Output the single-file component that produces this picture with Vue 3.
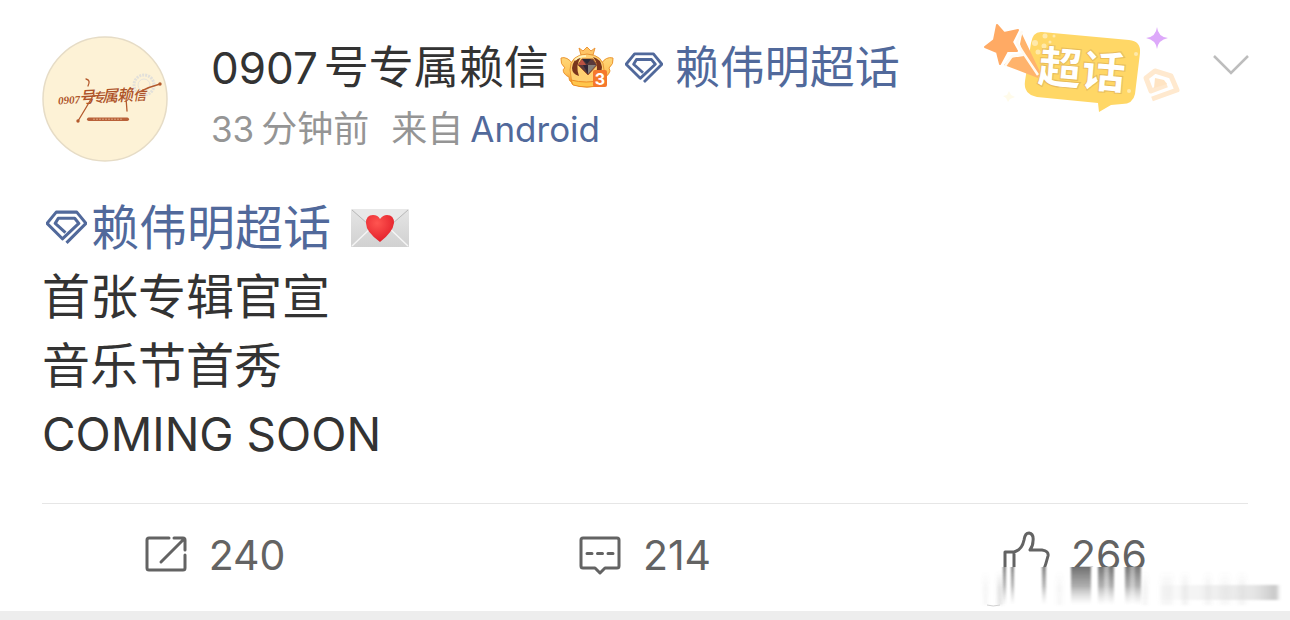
<script setup>
const author = { digits: '0907', name: '号专属赖信' }
const topic = '赖伟明超话'
const lines = ['首张专辑官宣', '音乐节首秀', 'COMING SOON']
const counts = { reposts: 240, comments: 214, likes: 266 }

const gem = 'M20 32 L39 13 L30 2 H10 L1 13 L16 28 L32 13 L28 8 H12 L9 13 L19 22'

const streaks = [
  { x: 33, w: 3, o: 0.85 },
  { x: 41, w: 3, o: 0.85 },
  { x: 72, w: 4, o: 0.8 },
  { x: 101, w: 20, o: 0.95 },
  { x: 128, w: 6, o: 0.9 },
  { x: 134, w: 5, o: 0.55 },
  { x: 139, w: 5, o: 0.9 },
  { x: 155, w: 5, o: 0.9 },
  { x: 160, w: 5, o: 0.6 },
  { x: 165, w: 6, o: 0.9 },
]
const hazes = [
  { x: 14, w: 3, o: 0.12 },
  { x: 28, w: 4, o: 0.3 },
  { x: 87, w: 5, o: 0.08 },
  { x: 173, w: 4, o: 0.12 },
  { x: 191, w: 12, o: 0.08 },
  { x: 212, w: 6, o: 0.12 },
  { x: 235, w: 6, o: 0.1 },
  { x: 250, w: 10, o: 0.07 },
  { x: 268, w: 8, o: 0.09 },
]
</script>

<template>
  <main class="page">
    <article class="post">
      <header class="head">
        <a class="avatar" href="#" aria-label="0907号专属赖信">
          <svg viewBox="0 0 126 126" width="126" height="126">
            <circle cx="63" cy="63" r="62" fill="#fdf2d6" stroke="#e6dcc6" stroke-width="1.5" />
            <circle cx="102" cy="49" r="10" fill="none" stroke="#e2e0da" stroke-width="3" stroke-dasharray="2 1" />
            <circle cx="102" cy="49" r="6" fill="none" stroke="#e6e3db" />
            <g fill="#ad5228" transform="rotate(-3 62 62)">
              <text x="16" y="66" class="sig-num">0907</text>
              <text y="66" class="sig"><tspan x="37" class="tall">号</tspan><tspan x="50">专</tspan><tspan x="60" class="tall">属</tspan><tspan x="75" class="tall">赖</tspan><tspan x="91">信</tspan></text>
            </g>
            <g fill="none" stroke="#b45a2d" stroke-width="1.3" stroke-linecap="round">
              <path d="M44 43 Q49 44 46 50 M52 58 Q44 72 36 85" />
              <path d="M95 57 Q106 51 118 48" />
              <path d="M84 62 L85 75" />
            </g>
            <circle cx="36" cy="85" r="1.700" fill="#b45a2d" />
            <circle cx="118" cy="48" r="1.700" fill="#b45a2d" />
            <rect x="45" y="81.500" width="42" height="3.500" rx="1.700" fill="#b96139" />
            <path d="M51 83.200 H81" stroke="#dca27e" stroke-width="1" stroke-dasharray="2 1" />
          </svg>
        </a>

        <div class="who">
          <div class="name-row">
            <a class="name" href="#"><span class="digits">{{ author.digits }}</span><span>{{ author.name }}</span></a>
            <svg class="crown" viewBox="0 0 54 44" width="54" height="44" aria-hidden="true">
              <defs>
                <linearGradient id="gold" x1="0" y1="0" x2="0" y2="1">
                  <stop offset="0" stop-color="#ffd779" />
                  <stop offset="0.6" stop-color="#ffc45b" />
                  <stop offset="1" stop-color="#f08a23" />
                </linearGradient>
              </defs>
              <path d="M13 18 Q7 10 1 12 Q0 18 5 22 Q2 23 4 27 Q6 30 9 31 Q8 35 13 37 H41 Q45 35 45 31 Q49 29 50 25 L49 22 Q54 18 53 12 Q46 10 41 18Z" fill="url(#gold)" stroke="#ec9734" stroke-width="1" />
              <path d="M19 2 L23 5 L27 1 L31 5 L35 2 L33 9 H21Z" fill="#ffc565" stroke="#ec9638" />
              <path d="M10 24 Q10 9 27 8 Q44 9 44 24 L42 38 Q27 44 12 38Z" fill="#ffd071" stroke="#e79535" />
              <path d="M12 22 Q13 13 21 11 Q15 19 19 30 Q12 28 12 22Z M42 21 Q41 13 33 11 Q39 18 36 28 Q42 27 42 21Z" fill="#7a351c" />
              <path d="M15 14 Q19 10 26 10" fill="none" stroke="#fff1b7" stroke-width="2" />
              <path d="M18 19 L22 13 H33 L37 19 L28 29Z" fill="#593a3b" stroke="#a15628" />
              <path d="M18 19 L22 13 L26 19Z" fill="#ba5142" />
              <path d="M22 13 H31 L27 18Z" fill="#2b2836" />
              <path d="M27 19 H36 L28 28Z" fill="#87817a" />
              <path d="M23 19 H28 V28Z" fill="#302435" />
              <path d="M11 34 Q26 38 42 34 L41 39 Q27 43 13 39Z" fill="#ffc64c" stroke="#ed8d25" />
              <rect x="33" y="24" width="14" height="17" rx="2" fill="#f5782c" />
              <text x="40" y="39" text-anchor="middle" class="level">3</text>
            </svg>
            <a class="topic" href="#">
              <svg class="gem" viewBox="0 0 40 34" width="38" height="32" aria-hidden="true"><path :d="gem" /></svg>
              <span>{{ topic }}</span>
            </a>
          </div>
          <div class="meta">
            <time><span class="latin">33</span><span>分钟前</span></time>
            <span class="from"><span>来自</span><a class="latin" href="#">Android</a></span>
          </div>
        </div>

        <a class="sticker" href="#" aria-label="超话">
          <svg viewBox="980 20 205 96" width="205" height="96">
            <path d="M1042 32 L1129 40 Q1141 41 1140 53 L1135 94 Q1133 104 1122 104 L1111 105 L1099 112 L1098 103 L1037 97 Q1023 94 1025 81 L1031 43 Q1033 31 1042 32Z" fill="#ffd766" />
            <g fill="#ffe9ab">
              <circle cx="1035" cy="43" r="3" /><circle cx="1045" cy="36" r="2.500" /><circle cx="1044" cy="46" r="2.500" />
              <circle cx="1038" cy="52" r="2.500" /><circle cx="1054" cy="36" r="1.500" /><circle cx="1050" cy="42" r="1.500" />
              <circle cx="1136" cy="54" r="2" /><circle cx="1129" cy="91" r="2" />
            </g>
            <path d="M1022 34 L1040 72 L1038 78 L1004 65 L1010 58 L1024 56 L1020 44Z" fill="#ffb36c" />
            <path d="M997 25 L1004 33 L1018 30 L1012 42 L1017 51 L1007 51 L1000 64 L997 52 L985 47 L994 40Z" fill="#ffaa64" stroke="#ffaa64" stroke-width="2" stroke-linejoin="round" />
            <path d="M1022 31 L1017 43 L1024 54 L1012 56 L1005 66 M1024 54 L1038 75" fill="none" stroke="#fffaf2" stroke-width="2.500" stroke-linejoin="round" />
            <text x="1082" y="86" text-anchor="middle" transform="rotate(5 1082 70)" class="sticker-text">超话</text>
            <path d="M1157 27 Q1158 37 1168 38 Q1158 40 1157 49 Q1156 40 1146 38 Q1156 37 1157 27Z" fill="#dda9fa" />
            <path d="M1152 99 L1177 90 L1171 76 L1155 71 L1146 78 L1151 91 L1167 85" fill="none" stroke="#ffe9cf" stroke-width="5" stroke-linejoin="round" />
            <path d="M1155 78 L1164 80 L1167 84 L1154 88Z" fill="#ffe4c3" />
            <path d="M1009 91 L1011 95 L1015 97 L1010 99 L1008 102 L1006 98 L1003 96 L1007 95Z" fill="#fffbea" />
          </svg>
        </a>

        <button class="more" type="button" aria-label="更多">
          <svg viewBox="0 0 38 22" width="38" height="22"><path d="M2 2 L19 19 L36 2" fill="none" stroke="#bdbdbd" stroke-width="2.500" /></svg>
        </button>
      </header>

      <div class="content">
        <p>
          <a class="body-topic" href="#"><svg class="gem" viewBox="0 0 40 34" width="41" height="35" aria-hidden="true"><path :d="gem" /></svg><span>{{ topic }}</span></a>
          <svg class="letter" viewBox="0 0 58 38" width="58" height="38" role="img" aria-label="情书">
            <defs>
              <linearGradient id="paper" x1="0" y1="0" x2="0" y2="1">
                <stop offset="0" stop-color="#e5e5e5" /><stop offset="1" stop-color="#d1d1d1" />
              </linearGradient>
              <radialGradient id="heart" cx="0.4" cy="0.3" r="0.7">
                <stop offset="0" stop-color="#ff5550" /><stop offset="1" stop-color="#e3202b" />
              </radialGradient>
            </defs>
            <rect width="58" height="38" rx="1" fill="url(#paper)" />
            <path d="M1 37 L22 17 M57 37 L36 17" stroke="#f5f5f5" stroke-width="1.500" />
            <path d="M1 0 L25 22 Q29 25 33 22 L57 0Z" fill="#e8e8e8" />
            <path d="M1 1 L25 22 Q29 25 33 22 L57 1" fill="none" stroke="#b9b9b9" />
            <path d="M29 33 Q15 23 15 14 Q15 6 22 6 Q27 6 29 10 Q32 6 36 6 Q43 6 43 14 Q42 23 29 33Z" fill="url(#heart)" />
          </svg>
        </p>
        <p v-for="line in lines" :key="line" :class="{ caps: line === 'COMING SOON' }">{{ line }}</p>
      </div>

      <footer class="actions">
        <button type="button" aria-label="转发 240">
          <svg class="icon" viewBox="0 0 42 42" width="42" height="42">
            <path d="M24 4 H4 Q2 4 2 6 V34 Q2 36 4 36 H38 Q40 36 40 34 V21 M29 4 H38 Q40 4 40 6 V16 M16 28 L39 5" />
          </svg>
          <span>{{ counts.reposts }}</span>
        </button>
        <button type="button" aria-label="评论 214">
          <svg class="icon" viewBox="0 0 42 42" width="42" height="42">
            <path d="M4 4 H38 Q40 4 40 6 V32 Q40 34 38 34 H26 L21 39 L16 34 H4 Q2 34 2 32 V6 Q2 4 4 4Z M8 19.500 H13 M18.500 19.500 H23.500 M29 19.500 H34" />
          </svg>
          <span>{{ counts.comments }}</span>
        </button>
        <button type="button" aria-label="赞 266">
          <svg class="icon" viewBox="0 0 46 42" width="46" height="42">
            <path d="M11 38 H2 V18 H11Z V18 Q19 16 21 6 Q22 -1 26 -1 Q31 0 30 7 Q30 12 27 16 H39 Q46 17 45 22 Q43 30 40 38 H11" />
          </svg>
          <span>{{ counts.likes }}</span>
        </button>
      </footer>

      <svg class="smear" viewBox="0 0 320 42" width="320" height="42" aria-hidden="true">
        <defs>
          <linearGradient id="fade" x1="0" y1="0" x2="0" y2="1">
            <stop offset="0" stop-color="#686868" />
            <stop offset="0.5" stop-color="#8d8d8d" stop-opacity="0.75" />
            <stop offset="1" stop-color="#c0c0c0" stop-opacity="0" />
          </linearGradient>
          <linearGradient id="haze" x1="0" y1="0" x2="0" y2="1">
            <stop offset="0" stop-color="#777" stop-opacity="0" />
            <stop offset="0.5" stop-color="#777" />
            <stop offset="1" stop-color="#777" stop-opacity="0.8" />
          </linearGradient>
          <linearGradient id="bar" x1="0" y1="0" x2="1" y2="0">
            <stop offset="0" stop-color="#ddd" stop-opacity="0.1" />
            <stop offset="0.8" stop-color="#d4d4d4" stop-opacity="0.6" />
            <stop offset="1" stop-color="#c4c4c4" />
          </linearGradient>
          <filter id="soft" x="-0.1" y="-0.1" width="1.2" height="1.2"><feGaussianBlur stdDeviation="1 0" /></filter>
          <filter id="softer"><feGaussianBlur stdDeviation="2 1" /></filter>
        </defs>
        <rect width="320" height="42" fill="#fff" />
        <g filter="url(#softer)">
          <rect v-for="h in hazes" :key="h.x" :x="h.x" y="4" :width="h.w" height="34" fill="url(#haze)" :opacity="h.o" />
          <rect x="190" y="18" width="118" height="15" fill="url(#bar)" />
        </g>
        <g filter="url(#soft)">
          <rect v-for="s in streaks" :key="s.x" :x="s.x" y="0" :width="s.w" height="38" fill="url(#fade)" :opacity="s.o" />
        </g>
        <path d="M17 38 Q23 40 30 38" fill="none" stroke="#d0d0d0" stroke-width="1" />
      </svg>
    </article>
  </main>
</template>

<style scoped>
.page {
  min-height: 100vh;
  background: #ededed;
  font-family: Inter, "Noto Sans CJK SC", sans-serif;
  color: #333;
}
.post {
  position: relative;
  background: #fff;
  padding-top: 36px;
}
a {
  color: #51699b;
  text-decoration: none;
}
button {
  border: 0;
  padding: 0;
  background: none;
  font: inherit;
  color: inherit;
  cursor: pointer;
}
svg {
  display: block;
  flex: none;
}
.head {
  display: flex;
  align-items: flex-start;
  padding: 0 40px 0 42px;
}
.avatar {
  flex: none;
}
.sig-num {
  font: italic 600 11px "Liberation Serif", serif;
}
.sig {
  font: italic 500 13px "Noto Sans CJK SC", sans-serif;
}
.tall {
  font-size: 16px;
}
.who {
  flex: 1;
  min-width: 0;
  margin-left: 43px;
}
.name-row {
  display: flex;
  align-items: center;
  height: 64px;
  gap: 11px;
  font-size: 45px;
  line-height: 60px;
  white-space: nowrap;
}
.name {
  display: flex;
  align-items: baseline;
  gap: 6px;
  color: #333;
}
.digits {
  font-size: 44px;
}
.level {
  font: bold 16px Inter, sans-serif;
  fill: #fff;
}
.topic {
  display: flex;
  align-items: center;
  gap: 12px;
}
.gem path {
  fill: none;
  stroke: #51699b;
  stroke-width: 3;
  stroke-linejoin: round;
}
.meta {
  display: flex;
  gap: 22px;
  font-size: 36px;
  line-height: 58px;
  color: #959595;
  white-space: nowrap;
}
.meta time,
.from {
  display: flex;
  align-items: baseline;
  gap: 7px;
}
.latin {
  font-size: 35px;
}
.sticker {
  flex: none;
  margin: -16px 27px 0 0;
}
.sticker-text {
  font: 900 44px "Noto Sans CJK SC", sans-serif;
  fill: #fff;
  stroke: #e9bd58;
  stroke-width: 1px;
}
.more {
  flex: none;
  margin-top: 18px;
}
.content {
  margin: 31px 42px 0;
  padding-bottom: 34px;
  border-bottom: 1px solid #e6e6e6;
  font-size: 48px;
  line-height: 69px;
}
.content p {
  display: flex;
  align-items: center;
  height: 69px;
  gap: 20px;
  margin: 0;
}
.content .caps {
  font-size: 46px;
}
.body-topic {
  display: flex;
  align-items: center;
  gap: 4px;
  padding-left: 4px;
}
.actions {
  display: grid;
  grid-template-columns: repeat(3, 1fr);
  padding-bottom: 5px;
  font-size: 41px;
  color: #636363;
}
.actions button {
  display: flex;
  align-items: center;
  justify-content: center;
  gap: 22px;
  height: 102px;
}
.icon {
  overflow: visible;
}
.icon path {
  fill: none;
  stroke: #636363;
  stroke-width: 3;
  stroke-linecap: round;
  stroke-linejoin: round;
}
.smear {
  position: absolute;
  right: 0;
  bottom: 2px;
  pointer-events: none;
}
</style>

<style>
body {
  margin: 0;
}
</style>
